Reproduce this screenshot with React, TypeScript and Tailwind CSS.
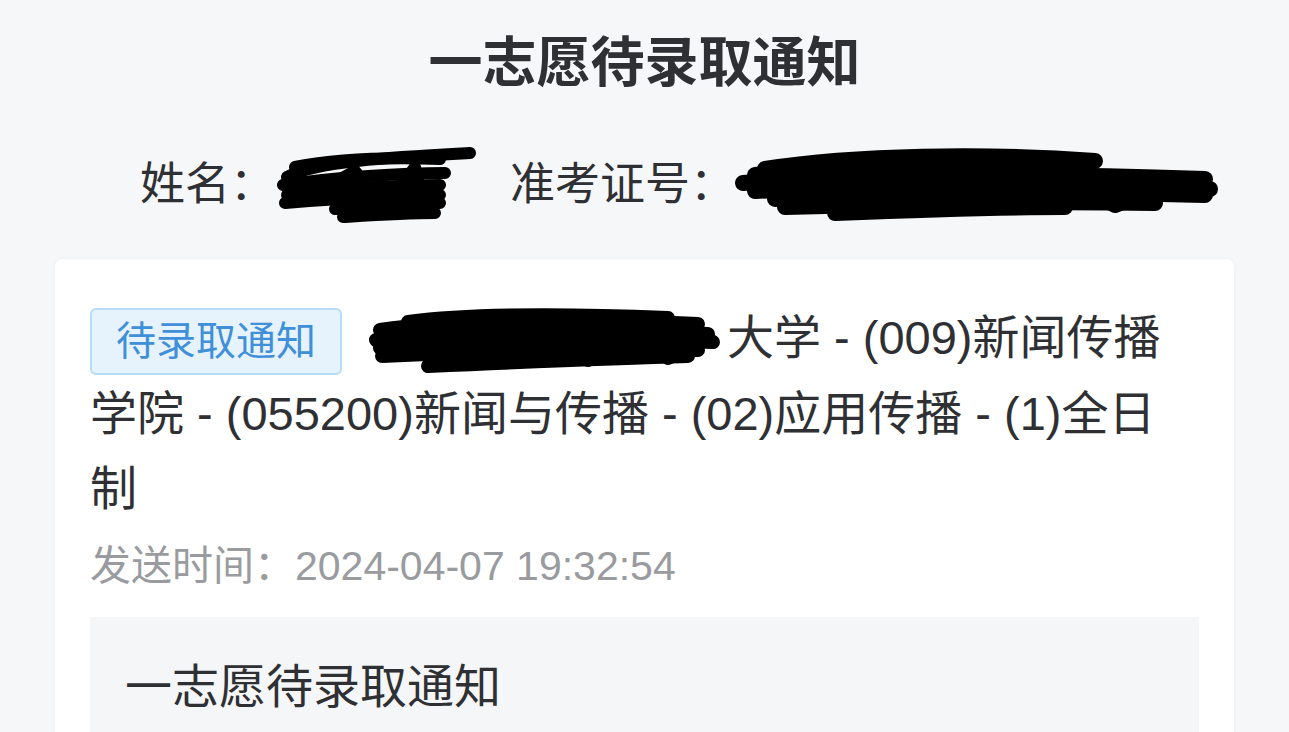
import React from "react";

const font = { fontFamily: '"Liberation Sans", "Noto Sans CJK SC", sans-serif' };

function Scribble({ w, h, sw = 13, strokes }: { w: number; h: number; sw?: number; strokes: string[] }) {
  return (
    <svg width={w} height={h} viewBox={`0 0 ${w} ${h}`} className="inline-block align-middle">
      {strokes.map((d, i) => (
        <path key={i} d={d} fill="none" stroke="#000" strokeWidth={sw} strokeLinecap="round" strokeLinejoin="round" />
      ))}
    </svg>
  );
}

export default function App() {
  return (
    <div className="min-h-screen bg-[#f6f7f9] text-[#2f3033]" style={font}>
      <h1 className="pt-[30px] text-center text-[54px] font-bold leading-[66px]">一志愿待录取通知</h1>

      <div className="mt-[49px] flex h-[80px] items-center pl-[140px] text-[45px]">
        <span>姓名：</span>
        <Scribble
          w={205}
          h={76}
          sw={12}
          strokes={[
            "M12 30 C40 14 120 10 195 6",
            "M20 20 C60 12 110 10 165 12",
            "M8 38 C60 30 130 26 170 26",
            "M12 48 C60 42 120 38 165 38",
            "M10 56 C60 52 120 48 165 48",
            "M60 62 C100 60 140 56 165 56",
            "M68 70 C100 68 130 66 160 66",
            "M40 46 L80 24 L110 60 L140 20 L150 64",
          ]}
        />
        <span className="ml-[30px]">准考证号：</span>
        <Scribble
          w={490}
          h={76}
          sw={16}
          strokes={[
            "M30 22 C120 8 250 6 360 14",
            "M20 28 C150 14 260 14 340 20",
            "M8 36 C140 26 300 26 470 32",
            "M20 44 C200 36 350 36 475 42",
            "M40 52 C200 46 340 44 470 48",
            "M50 60 C200 56 300 54 420 56",
            "M100 66 C200 62 260 60 330 60",
            "M30 32 L60 58 L100 26 L140 60 L200 24 L260 60 L320 26 L380 58 L440 34",
            "M60 40 L120 56 L180 36 L240 56 L300 34 L360 50",
          ]}
        />
      </div>

      <div className="mx-[55px] mt-[34px] rounded-lg bg-white px-[35px] pt-[41px] shadow-[0_0_4px_rgba(0,0,0,0.04)]">
        <div className="text-[47px] leading-[75px]">
          <span className="mr-[26px] inline-block h-[67px] rounded-[6px] border-2 border-[#b7dcf5] bg-[#e6f3fd] px-[24px] align-middle text-[40px] leading-[63px] text-[#3f8fd9]">
            待录取通知
          </span>
          <Scribble
            w={359}
            h={68}
            sw={14}
            strokes={[
              "M40 14 C100 6 200 6 300 10",
              "M12 22 C80 12 200 10 330 16",
              "M8 32 C100 22 220 20 340 26",
              "M12 40 C120 32 240 30 345 34",
              "M14 48 C100 44 220 40 330 42",
              "M60 58 C150 54 240 50 320 48",
              "M30 30 L60 48 L90 24 L130 54 L170 22 L220 52 L260 24 L300 50 L340 30",
            ]}
          />
          大学 - (009)新闻传播学院 - (055200)新闻与传播 - (02)应用传播 - (1)全日制
        </div>
        <div className="mt-[15px] text-[41px] leading-[50px] text-[#9a9b9f]">发送时间：2024-04-07 19:32:54</div>
        <div className="mt-[26px] bg-[#f5f6f8] px-[35px] pt-[45px] pb-[40px]">
          <div className="text-[47px] leading-[50px]">一志愿待录取通知</div>
        </div>
      </div>
    </div>
  );
}
